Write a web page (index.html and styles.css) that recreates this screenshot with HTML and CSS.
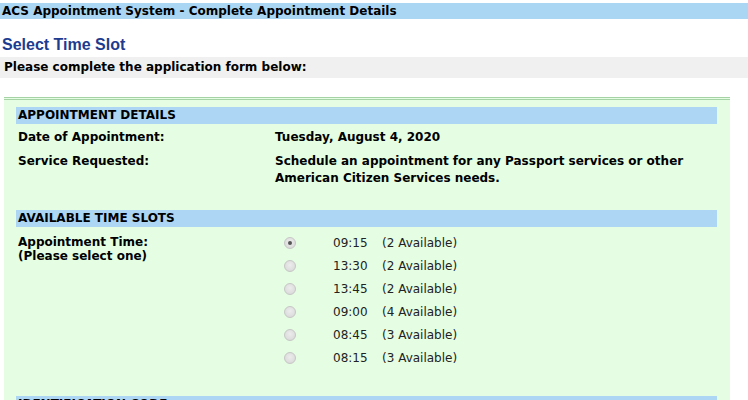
FILE: index.html
```html
<!DOCTYPE html>
<html>
<head>
<meta charset="utf-8">
<link rel="stylesheet" href="styles.css">
</head>
<body>
<div class="topbar">ACS Appointment System - Complete Appointment Details</div>
<h1 class="title">Select Time Slot</h1>
<div class="notice">Please complete the application form below:</div>
<div class="box">
  <div class="bar">APPOINTMENT DETAILS</div>
  <div class="details">
    <div class="label">Date of Appointment:</div>
    <div class="value">Tuesday, August 4, 2020</div>
    <div class="label">Service Requested:</div>
    <div class="value">Schedule an appointment for any Passport services or other<br>American Citizen Services needs.</div>
  </div>
  <div class="bar">AVAILABLE TIME SLOTS</div>
  <div class="slots">
    <div class="label tight">Appointment Time:<br>(Please select one)</div>
    <div class="slot-list">
      <div class="slot"><span class="radio checked"></span><span class="time">09:15</span><span class="avail">(2 Available)</span></div>
      <div class="slot"><span class="radio"></span><span class="time">13:30</span><span class="avail">(2 Available)</span></div>
      <div class="slot"><span class="radio"></span><span class="time">13:45</span><span class="avail">(2 Available)</span></div>
      <div class="slot"><span class="radio"></span><span class="time">09:00</span><span class="avail">(4 Available)</span></div>
      <div class="slot"><span class="radio"></span><span class="time">08:45</span><span class="avail">(3 Available)</span></div>
      <div class="slot"><span class="radio"></span><span class="time">08:15</span><span class="avail">(3 Available)</span></div>
    </div>
  </div>
  <div class="bar">IDENTIFICATION CODE</div>
</div>
</body>
</html>
```
FILE: styles.css
```css
html, body {
  margin: 0;
  padding: 0;
  background: #ffffff;
}
body {
  font-family: "DejaVu Sans", Verdana, sans-serif;
  font-size: 12px;
  color: #000;
  overflow: hidden;
  height: 400px;
}
.topbar {
  margin-top: 3px;
  height: 16px;
  line-height: 16px;
  background: #aad5f3;
  font-weight: bold;
  padding-left: 2px;
}
.title {
  margin: 16px 0 0 2px;
  height: 22px;
  line-height: 20px;
  font-family: "Liberation Sans", Arial, sans-serif;
  font-size: 16px;
  font-weight: bold;
  color: #1d3c8f;
}
.notice {
  height: 21px;
  line-height: 21px;
  background: #f0f0f0;
  font-weight: bold;
  padding-left: 4px;
}
.box {
  margin: 19px 0 0 4px;
  width: 701px;
  padding: 7px 13px 8px 12px;
  background: #e5fee3;
  border-top: 3px double #a6d3a6;
}
.bar {
  height: 17px;
  line-height: 17px;
  background: #acd6f4;
  font-weight: bold;
  padding-left: 2px;
}
.details {
  display: grid;
  grid-template-columns: 257px 1fr;
  align-content: start;
  row-gap: 7px;
  padding: 5px 0 0 2px;
  height: 81px;
  font-weight: bold;
  line-height: 17px;
}
.slots {
  display: grid;
  grid-template-columns: 257px 1fr;
  align-items: start;
  padding: 8px 0 0 2px;
  height: 161px;
}
.label {
  font-weight: bold;
}
.tight {
  line-height: 14px;
}
.slot-list {
  display: flex;
  flex-direction: column;
  margin-top: -4px;
}
.slot {
  display: flex;
  align-items: center;
  height: 23px;
}
.radio {
  width: 12px;
  height: 12px;
  border-radius: 50%;
  border: 1px solid #c6c6c6;
  background: radial-gradient(circle at 50% 40%, #ececec 0%, #d6d6d6 100%);
  margin-left: 9px;
  box-sizing: border-box;
  position: relative;
}
.radio.checked::after {
  content: "";
  position: absolute;
  left: 3px;
  top: 3px;
  width: 4px;
  height: 4px;
  border-radius: 50%;
  background: #555;
}
.time {
  margin-left: 37px;
  width: 49px;
  color: #222;
}
.avail {
  color: #222;
}
```
